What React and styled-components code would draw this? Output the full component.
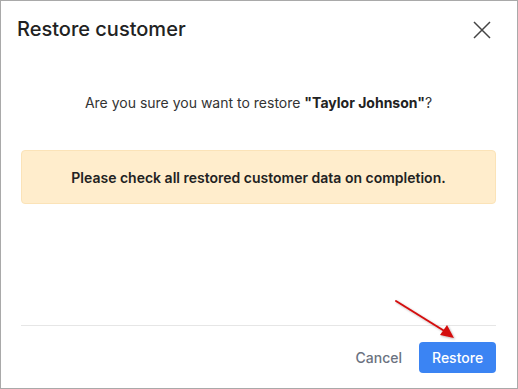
import React from 'react';
import styled, { createGlobalStyle } from 'styled-components';

const GlobalStyle = createGlobalStyle`
  * { box-sizing: border-box; }
  body {
    margin: 0;
    background: #ffffff;
    font-family: 'Inter', 'Noto Sans', sans-serif;
  }
`;

export default function App() {
  return (
    <>
      <GlobalStyle />
      <StyledFrame>
        <StyledHeader>
          <StyledTitle>Restore customer</StyledTitle>
          <StyledClose aria-label="Close">
            <svg width="18" height="18" viewBox="0 0 18 18">
              <path d="M1 1 L17 17 M17 1 L1 17" stroke="#444" strokeWidth="1.5" />
            </svg>
          </StyledClose>
        </StyledHeader>

        <StyledBody>
          <StyledQuestion>
            Are you sure you want to restore <b>"Taylor Johnson"</b>?
          </StyledQuestion>
          <StyledAlert>Please check all restored customer data on completion.</StyledAlert>
        </StyledBody>

        <StyledFooter>
          <StyledButton>Cancel</StyledButton>
          <StyledButton primary>Restore</StyledButton>
        </StyledFooter>

        <StyledArrow width="80" height="50" viewBox="0 0 80 50">
          <defs>
            <filter id="sh" x="-20%" y="-20%" width="140%" height="140%">
              <feDropShadow dx="1" dy="1" stdDeviation="0.8" floodColor="#000" floodOpacity="0.3" />
            </filter>
          </defs>
          <g filter="url(#sh)">
            <path d="M4 4 L54 35" stroke="#d40f0f" strokeWidth="2" strokeLinecap="round" />
            <path d="M62 41 L48 38 L55 28 Z" fill="#d40f0f" />
          </g>
        </StyledArrow>
      </StyledFrame>
    </>
  );
}

const StyledFrame = styled.div`
  position: relative;
  width: 518px;
  height: 389px;
  border: 1px solid #a9a9a9;
  display: flex;
  flex-direction: column;
  background: #fff;
`;

const StyledHeader = styled.header`
  display: flex;
  justify-content: space-between;
  align-items: center;
  padding: 14px 26px 0 16px;
  height: 42px;
`;

const StyledTitle = styled.h2`
  margin: 0;
  font-size: 20px;
  font-weight: 500;
  line-height: 28px;
  color: #222;
`;

const StyledClose = styled.button`
  display: flex;
  padding: 0;
  border: 0;
  background: none;
  margin-top: 1px;
`;

const StyledBody = styled.section`
  flex: 1;
  padding: 0 21px 0 20px;
`;

const StyledQuestion = styled.p`
  margin: 50px 0 0;
  text-align: center;
  font-size: 14px;
  line-height: 20px;
  color: #333;

  b {
    font-weight: 700;
    color: #222;
  }
`;

const StyledAlert = styled.div`
  margin-top: 37px;
  height: 54px;
  display: flex;
  align-items: center;
  justify-content: center;
  background: #ffedcc;
  border: 1px solid #fbe3b8;
  border-radius: 4px;
  font-size: 14px;
  font-weight: 600;
  color: #222;
`;

const StyledFooter = styled.footer`
  margin: 0 21px 0 20px;
  border-top: 1px solid #e6e6e6;
  padding: 16px 0 15px;
  display: flex;
  justify-content: flex-end;
  align-items: center;
  gap: 4px;
`;

const StyledButton = styled.button`
  height: 31px;
  padding: 0 13px;
  border: 0;
  border-radius: 4px;
  font-family: inherit;
  font-size: 14px;
  font-weight: 500;
  background: ${(p) => (p.primary ? '#3b84f3' : 'transparent')};
  color: ${(p) => (p.primary ? '#fff' : '#6b7280')};
  width: ${(p) => (p.primary ? '77px' : 'auto')};
`;

const StyledArrow = styled.svg`
  position: absolute;
  left: 391px;
  top: 296px;
  overflow: visible;
`;
